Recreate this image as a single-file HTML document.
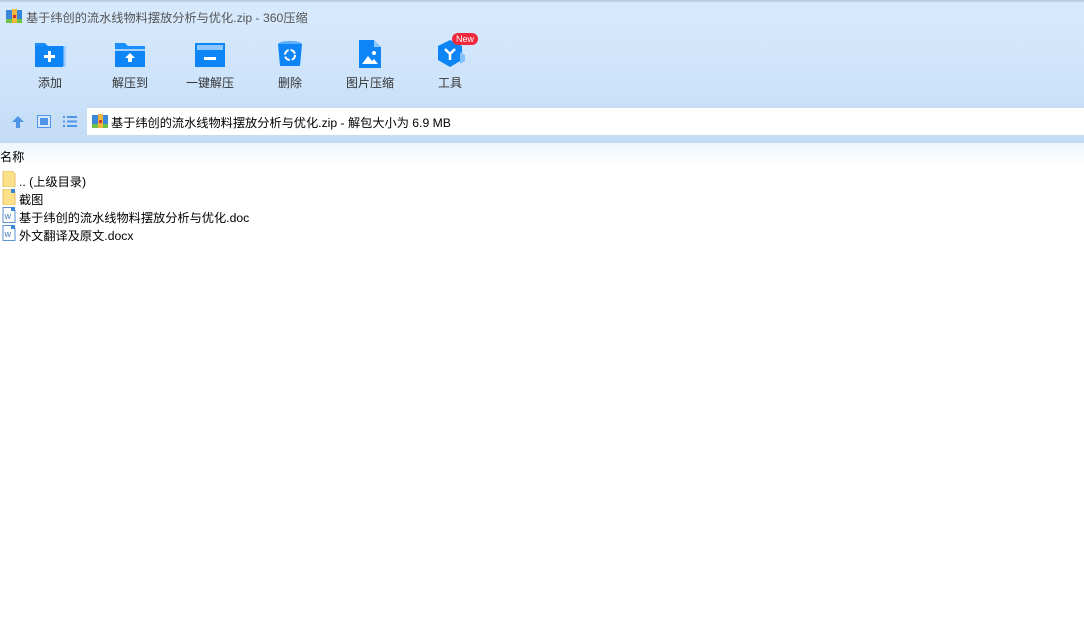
<!DOCTYPE html>
<html><head><meta charset="utf-8"><style>
*{margin:0;padding:0;box-sizing:border-box}
body{width:1084px;height:618px;background:#fff;font-family:"Liberation Sans","Noto Sans CJK SC",sans-serif;position:relative;overflow:hidden;color:#000}
#hdr{position:absolute;left:0;top:0;width:1084px;height:143px;background:linear-gradient(#d8eafd,#cde3fa 60%,#c3dbf5)}
#topline{position:absolute;left:0;top:0;width:1084px;height:3px;background:linear-gradient(#aec4da,#d8eafd)}
#fade{position:absolute;left:0;top:143px;width:1084px;height:24px;background:linear-gradient(#eef5fd,#fff)}
.title{position:absolute;left:26px;top:8px;font-size:12.2px;color:#555;white-space:nowrap}
.tb{position:absolute;top:40px;width:80px;text-align:center;font-size:12px;color:#333}
.tb svg{display:block;margin:0 auto 6px}
#addr{position:absolute;left:87px;top:107px;width:997px;height:28px;background:#fff;border-top:1px solid #c8dcf0}
#addr span{position:absolute;left:24px;top:5px;font-size:12.2px;white-space:nowrap}
.row{position:absolute;left:0;font-size:12.2px;white-space:nowrap}
.row svg{position:absolute;left:2px;top:0}
.row span{position:absolute;left:19px;top:1px}
</style></head><body>
<div id="hdr"></div><div id="topline"></div><div id="fade"></div>
<svg style="position:absolute;left:6px;top:9px" width="16" height="14"><rect x="0" y="1" width="16" height="13" fill="#3a86d8"/><rect x="0" y="10" width="16" height="4" fill="#6fc14a"/><rect x="6" y="0" width="5" height="14" fill="#f0b840"/><rect x="7" y="6" width="3" height="3" fill="#c33"/></svg>
<div class="title">基于纬创的流水线物料摆放分析与优化.zip - 360压缩</div>

<div class="tb" style="left:10px"><svg width="32" height="28"><path d="M1 3h10l3 3h16v20H1z" fill="#1a8ffb"/><rect x="6" y="6" width="26" height="21" fill="#7fc0ff" opacity=".6"/><path d="M1 6h28v21H1z" fill="#0d85f6"/><path d="M14 11h3v4h4v3h-4v4h-3v-4h-4v-3h4z" fill="#fff"/></svg>添加</div>
<div class="tb" style="left:90px"><svg width="32" height="28"><path d="M1 3h10l3 3h17v21H1z" fill="#1a8ffb"/><rect x="1" y="9" width="30" height="2" fill="#9fd0ff"/><path d="M1 11h30v16H1z" fill="#0d85f6"/><path d="M16 13l5 5h-3v4h-4v-4h-3z" fill="#fff"/></svg>解压到</div>
<div class="tb" style="left:170px"><svg width="32" height="28"><path d="M1 3h30v24H1z" fill="#0d85f6"/><rect x="3" y="5" width="26" height="5" fill="#8ec8ff"/><rect x="10" y="17" width="12" height="3" fill="#fff"/></svg>一键解压</div>
<div class="tb" style="left:250px"><svg width="32" height="28"><ellipse cx="16" cy="4" rx="12" ry="3" fill="#5aaefc"/><path d="M4 4h24l-2 22H6z" fill="#0d85f6"/><circle cx="16" cy="15" r="5" fill="none" stroke="#fff" stroke-width="2" stroke-dasharray="6 2"/></svg>删除</div>
<div class="tb" style="left:330px"><svg width="32" height="28"><path d="M5 0h15l7 7v21H5z" fill="#0d85f6"/><path d="M20 0l7 7h-7z" fill="#8ec8ff"/><path d="M8 24l6-8 4 5 2-2 4 5z" fill="#fff"/><circle cx="20" cy="13" r="2" fill="#fff"/></svg>图片压缩</div>
<div class="tb" style="left:410px"><svg width="40" height="28"><path d="M20 0l12 6v14l-12 7-12-7V6z" fill="#0d85f6"/><path d="M30 12l5 3v6l-5 3z" fill="#7fc0ff"/><path d="M15 9l5 5 5-5M20 14v6" stroke="#fff" stroke-width="2.5" fill="none"/></svg>工具</div>
<div style="position:absolute;left:452px;top:33px;width:26px;height:12px;border-radius:6px;background:#f0283c;color:#fff;font-size:9px;text-align:center;line-height:12px">New</div>

<svg style="position:absolute;left:11px;top:115px" width="14" height="14"><path d="M7 1l6 6H9v6H5V7H1z" fill="#4e95e8"/></svg>
<svg style="position:absolute;left:37px;top:115px" width="14" height="13"><rect x=".5" y=".5" width="13" height="12" fill="#d8e8fa" stroke="#4e95e8"/><rect x="3" y="3" width="8" height="7" fill="#4e95e8"/></svg>
<svg style="position:absolute;left:63px;top:115px" width="14" height="13"><g fill="#4e95e8"><rect x="0" y="1" width="2" height="2"/><rect x="4" y="1" width="10" height="2"/><rect x="0" y="5.5" width="2" height="2"/><rect x="4" y="5.5" width="10" height="2"/><rect x="0" y="10" width="2" height="2"/><rect x="4" y="10" width="10" height="2"/></g></svg>
<div id="addr"><svg style="position:absolute;left:5px;top:6px" width="16" height="14"><rect x="0" y="1" width="16" height="13" fill="#3a86d8"/><rect x="0" y="10" width="16" height="4" fill="#6fc14a"/><rect x="6" y="0" width="5" height="14" fill="#f0b840"/><rect x="7" y="6" width="3" height="3" fill="#c33"/></svg><span>基于纬创的流水线物料摆放分析与优化.zip - 解包大小为 6.9 MB</span></div>

<div class="row" style="top:147px">名称</div>
<div class="row" style="top:171px;height:17px"><svg width="14" height="16"><path d="M1 0h9l3 3v13H1z" fill="#fde08a" stroke="#e8c060"/></svg><span>.. (上级目录)</span></div>
<div class="row" style="top:189px;height:17px"><svg width="14" height="16"><path d="M1 0h9l3 3v13H1z" fill="#fde08a" stroke="#e8c060"/><rect x="9" y="0" width="4" height="4" fill="#3a86d8"/></svg><span>截图</span></div>
<div class="row" style="top:207px;height:17px"><svg width="14" height="16"><path d="M1 .5h9l3 3v12H1z" fill="#fff" stroke="#5b8fd0"/><rect x="9" y="0" width="4" height="4" fill="#3a86d8"/><text x="2.5" y="12" font-size="7" fill="#3a6fc0" font-family="Liberation Sans">W</text></svg><span>基于纬创的流水线物料摆放分析与优化.doc</span></div>
<div class="row" style="top:225px;height:17px"><svg width="14" height="16"><path d="M1 .5h9l3 3v12H1z" fill="#fff" stroke="#5b8fd0"/><rect x="9" y="0" width="4" height="4" fill="#3a86d8"/><text x="2.5" y="12" font-size="7" fill="#3a6fc0" font-family="Liberation Sans">W</text></svg><span>外文翻译及原文.docx</span></div>
</body></html>
